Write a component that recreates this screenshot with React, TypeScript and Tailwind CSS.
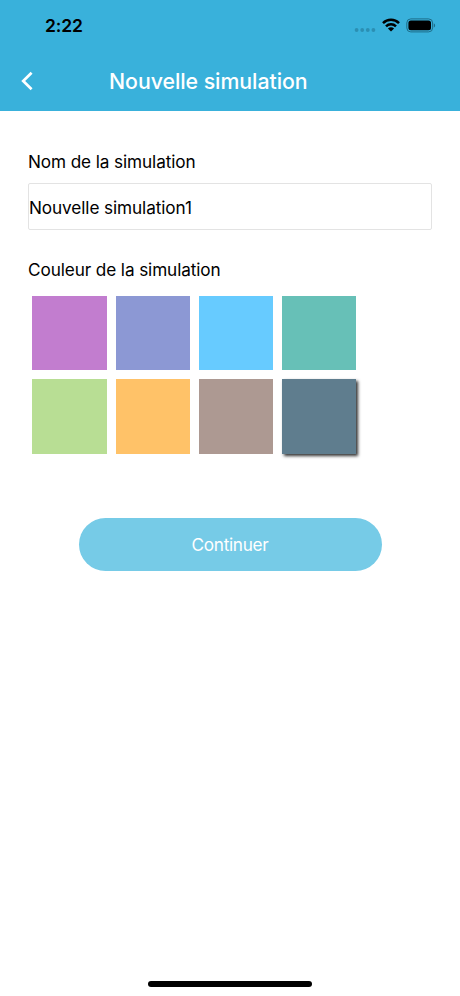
const swatches = [
  { name: "Violet", fill: "bg-[#c27dcf]" },
  { name: "Indigo", fill: "bg-[#8c98d4]" },
  { name: "Bleu", fill: "bg-[#67cbff]" },
  { name: "Turquoise", fill: "bg-[#67c0b7]" },
  { name: "Vert", fill: "bg-[#b8de94]" },
  { name: "Orange", fill: "bg-[#ffc268]" },
  { name: "Taupe", fill: "bg-[#ad9992]" },
  { name: "Ardoise", fill: "bg-[#5f7d8e]", selected: true },
];

function StatusIcons() {
  return (
    <div className="mt-[17px] flex h-[17px] items-center">
      <svg width="22" height="17" viewBox="0 0 22 17" className="fill-[#2b8fb3]">
        <circle cx="2.6" cy="13" r="1.9" />
        <circle cx="8.2" cy="13" r="1.9" />
        <circle cx="13.8" cy="13" r="1.9" />
        <circle cx="19.4" cy="13" r="1.9" />
      </svg>
      <svg width="18" height="14" viewBox="0 0 18 14" className="ml-[6px] -mt-[1px]">
        <g fill="none" stroke="#000" strokeWidth="2.5">
          <path d="M1 5.1 C5.4 .7 12.6 .7 17 5.1" />
          <path d="M4 8.3 C6.8 5.5 11.2 5.5 14 8.3" />
        </g>
        <path d="M9 13.6 L5.9 10.5 C7.6 8.8 10.4 8.8 12.1 10.5 Z" />
      </svg>
      <svg width="30" height="15" viewBox="0 0 30 15" className="ml-[6px]">
        <rect x=".8" y=".9" width="25.8" height="13" rx="4" fill="none" stroke="#1d6d89" />
        <rect x="2.4" y="2.5" width="22.6" height="9.8" rx="2.5" />
        <path d="M27.8 5.2 C29.6 5.9 29.6 8.9 27.8 9.6 Z" fill="#1d6d89" />
      </svg>
    </div>
  );
}

export default function App() {
  return (
    <div className="flex h-[996px] w-[460px] flex-col overflow-hidden bg-white font-['Inter','Liberation_Sans',sans-serif] text-black">
      <header className="h-[111px] bg-[#39b1db]">
        <div className="flex h-[51px] justify-between pl-[45px] pr-[24px]">
          <span className="mt-[13px] text-[17.5px] leading-[26px] font-semibold tracking-[-0.1px]">2:22</span>
          <StatusIcons />
        </div>
        <div className="flex h-[60px] items-center pl-[20px]">
          <button aria-label="Retour" className="-mt-[1px] flex w-[89px]">
            <svg width="14" height="20" viewBox="0 0 14 20" fill="none" stroke="#fff" strokeWidth="2.7">
              <path d="M11.6 1.8 L3.2 10 L11.6 18.2" />
            </svg>
          </button>
          <h1 className="text-[21.3px] leading-[28px] font-medium tracking-[-0.04px] whitespace-nowrap text-white">Nouvelle simulation</h1>
        </div>
      </header>
      <main className="flex flex-col px-[28px] pt-[38px]">
        <label htmlFor="nom" className="text-[17.2px] leading-[26px] tracking-[-0.11px]">Nom de la simulation</label>
        <input
          id="nom"
          defaultValue="Nouvelle simulation1"
          className="mt-[8px] h-[47px] w-[404px] rounded-[2px] border border-[#e3e3e3] pt-[2px] text-[17.2px] tracking-[-0.1px] outline-none"
        />
        <h2 className="mt-[27px] text-[17.2px] leading-[26px] tracking-[-0.11px]">Couleur de la simulation</h2>
        <div className="mt-[13px] ml-[4.4px] grid grid-cols-[repeat(4,74.4px)] gap-[8.8px]">
          {swatches.map((s) => (
            <button
              key={s.name}
              aria-label={s.name}
              className={`h-[74.4px] ${s.fill} ${s.selected ? "shadow-[2px_2px_3px_#333]" : ""}`}
            />
          ))}
        </div>
        <button className="mt-[64px] h-[53.5px] w-[303px] self-center rounded-full bg-[#76cbe7] pt-[2px] text-[17.2px] tracking-[-0.3px] text-white">
          Continuer
        </button>
      </main>
      <div className="mt-auto mb-[9px] h-[6px] w-[164px] self-center rounded-full bg-black" />
    </div>
  );
}
